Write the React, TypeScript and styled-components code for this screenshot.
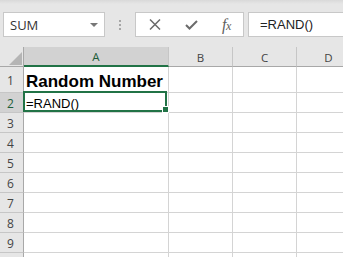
import * as React from "react";
import styled, { createGlobalStyle } from "styled-components";

const GlobalStyle = createGlobalStyle`
    html, body {
        margin: 0;
        padding: 0;
        background: #ffffff;
        overflow: hidden;
    }
`;

const GREEN = "#217346";

const Page = styled.div`
    width: 343px;
    height: 257px;
    overflow: hidden;
    font-family: "Open Sans", "Noto Sans", sans-serif;
`;

const Toolbar = styled.div`
    display: flex;
    align-items: flex-start;
    height: 47px;
    padding-top: 12px;
    box-sizing: border-box;
    background: linear-gradient(#d9d9d9 0px, #e6e6e6 4px, #e6e6e6 100%);
`;

const Box = styled.div`
    height: 25px;
    box-sizing: border-box;
    background: #ffffff;
    border: 1px solid #c8c8c8;
    display: flex;
    align-items: center;
`;

const NameBox = styled(Box)`
    margin-left: 3px;
    width: 102px;
    padding: 0 6px;
    justify-content: space-between;
    font-size: 13px;
    color: #333333;
`;

const Caret = styled.span`
    width: 0;
    height: 0;
    border-left: 4px solid transparent;
    border-right: 4px solid transparent;
    border-top: 4px solid #777777;
    margin-top: 1px;
`;

const Grip = styled.div`
    width: 30px;
    height: 25px;
    display: flex;
    flex-direction: column;
    align-items: center;
    justify-content: center;
    gap: 2px;
    > span {
        width: 2px;
        height: 2px;
        background: #a6a6a6;
    }
`;

const FuncBox = styled(Box)`
    width: 109px;
`;

const FuncButton = styled.div<{ w: number }>`
    width: ${p => p.w}px;
    height: 100%;
    display: flex;
    align-items: center;
    justify-content: center;
    color: #6b6b6b;
`;

const Fx = styled.span`
    font-family: "Liberation Serif", "DejaVu Serif", serif;
    font-style: italic;
    font-size: 16px;
    color: #5f5f5f;
    letter-spacing: -0.5px;
    > small {
        font-size: 12px;
    }
`;

const FormulaBox = styled(Box)`
    flex: 1;
    margin-left: 4px;
    margin-right: -10px;
    padding-left: 11px;
    font-family: "Liberation Sans", Arial, sans-serif;
    font-size: 13px;
    color: #222222;
`;

const Sheet = styled.div`
    display: grid;
    grid-template-columns: 24px 145px 64px 64px 64px;
    grid-template-rows: 20px 26px repeat(10, 20px);
    background: #ffffff;
`;

const Corner = styled.div`
    background: #e6e6e6;
    border-right: 1px solid #a8a8a8;
    border-bottom: 1px solid #a8a8a8;
    box-sizing: border-box;
    display: flex;
    align-items: flex-end;
    justify-content: flex-end;
    padding: 0 1px 1px 0;
`;

const ColHead = styled.div<{ active?: boolean }>`
    box-sizing: border-box;
    background: ${p => (p.active ? "#d2d2d2" : "#e6e6e6")};
    border-right: 1px solid #c6c6c6;
    border-bottom: ${p => (p.active ? `2px solid ${GREEN}` : "1px solid #a8a8a8")};
    display: flex;
    align-items: center;
    justify-content: center;
    font-size: 11.5px;
    color: ${p => (p.active ? "#1d5e3a" : "#444444")};
    padding-top: 1px;
`;

const RowHead = styled.div<{ active?: boolean }>`
    box-sizing: border-box;
    background: ${p => (p.active ? "#d2d2d2" : "#e6e6e6")};
    border-right: 1px solid #a8a8a8;
    border-bottom: 1px solid #c6c6c6;
    display: flex;
    align-items: center;
    justify-content: center;
    padding-right: 2px;
    padding-top: 1px;
    font-size: 12px;
    color: ${p => (p.active ? "#1d5e3a" : "#444444")};
`;

const Cell = styled.div<{ bold?: boolean }>`
    position: relative;
    box-sizing: border-box;
    border-right: 1px solid #d4d4d4;
    border-bottom: 1px solid #d4d4d4;
    display: flex;
    align-items: flex-end;
    padding: 0 2px 2px 2px;
    font-family: "Liberation Sans", Arial, sans-serif;
    font-size: ${p => (p.bold ? "17px" : "13px")};
    font-weight: ${p => (p.bold ? 700 : 400)};
    line-height: 1;
    color: #000000;
    white-space: nowrap;
`;

const Selection = styled.div`
    position: absolute;
    left: -1px;
    right: 1px;
    top: -2px;
    bottom: 0;
    border: 2px solid ${GREEN};
    pointer-events: none;
`;

const FillHandle = styled.div`
    position: absolute;
    right: -4px;
    bottom: -3px;
    width: 5px;
    height: 5px;
    background: ${GREEN};
    border: 1px solid #ffffff;
`;

const columns = ["A", "B", "C", "D"];
const cells: Record<string, string> = {
    A1: "Random Number",
    A2: "=RAND()",
};

function CornerMark() {
    return (
        <svg width="13" height="13" viewBox="0 0 13 13">
            <polygon points="13,0 13,13 0,13" fill="#b5b5b5" />
        </svg>
    );
}

function CloseIcon() {
    return (
        <svg width="12" height="11" viewBox="0 0 12 11">
            <path d="M1 0.5 L11 10.5 M11 0.5 L1 10.5" stroke="#6b6b6b" strokeWidth="1.5" fill="none" />
        </svg>
    );
}

function CheckIcon() {
    return (
        <svg width="13" height="10" viewBox="0 0 13 10">
            <path d="M1 5 L4.5 8.5 L12 1" stroke="#6b6b6b" strokeWidth="2" fill="none" />
        </svg>
    );
}

export default function App() {
    // rows 1-9 carry a label; the last row only peeks in at the bottom edge
    const rows = Array.from({ length: 11 }, (_, i) => i + 1);
    return (
        <Page>
            <GlobalStyle />
            <Toolbar>
                <NameBox>
                    <span>SUM</span>
                    <Caret />
                </NameBox>
                <Grip>
                    <span />
                    <span />
                    <span />
                </Grip>
                <FuncBox>
                    <FuncButton w={37}><CloseIcon /></FuncButton>
                    <FuncButton w={37}><CheckIcon /></FuncButton>
                    <FuncButton w={33}><Fx>f<small>x</small></Fx></FuncButton>
                </FuncBox>
                <FormulaBox>=RAND()</FormulaBox>
            </Toolbar>
            <Sheet>
                <Corner><CornerMark /></Corner>
                {columns.map(c => (
                    <ColHead key={c} active={c === "A"}>{c}</ColHead>
                ))}
                {rows.map(r => (
                    <React.Fragment key={r}>
                        <RowHead active={r === 2}>{r < 10 ? r : ""}</RowHead>
                        {columns.map(c => {
                            const id = c + r;
                            return (
                                <Cell key={id} bold={id === "A1"}>
                                    {cells[id]}
                                    {id === "A2" && <Selection><FillHandle /></Selection>}
                                </Cell>
                            );
                        })}
                    </React.Fragment>
                ))}
            </Sheet>
        </Page>
    );
}
